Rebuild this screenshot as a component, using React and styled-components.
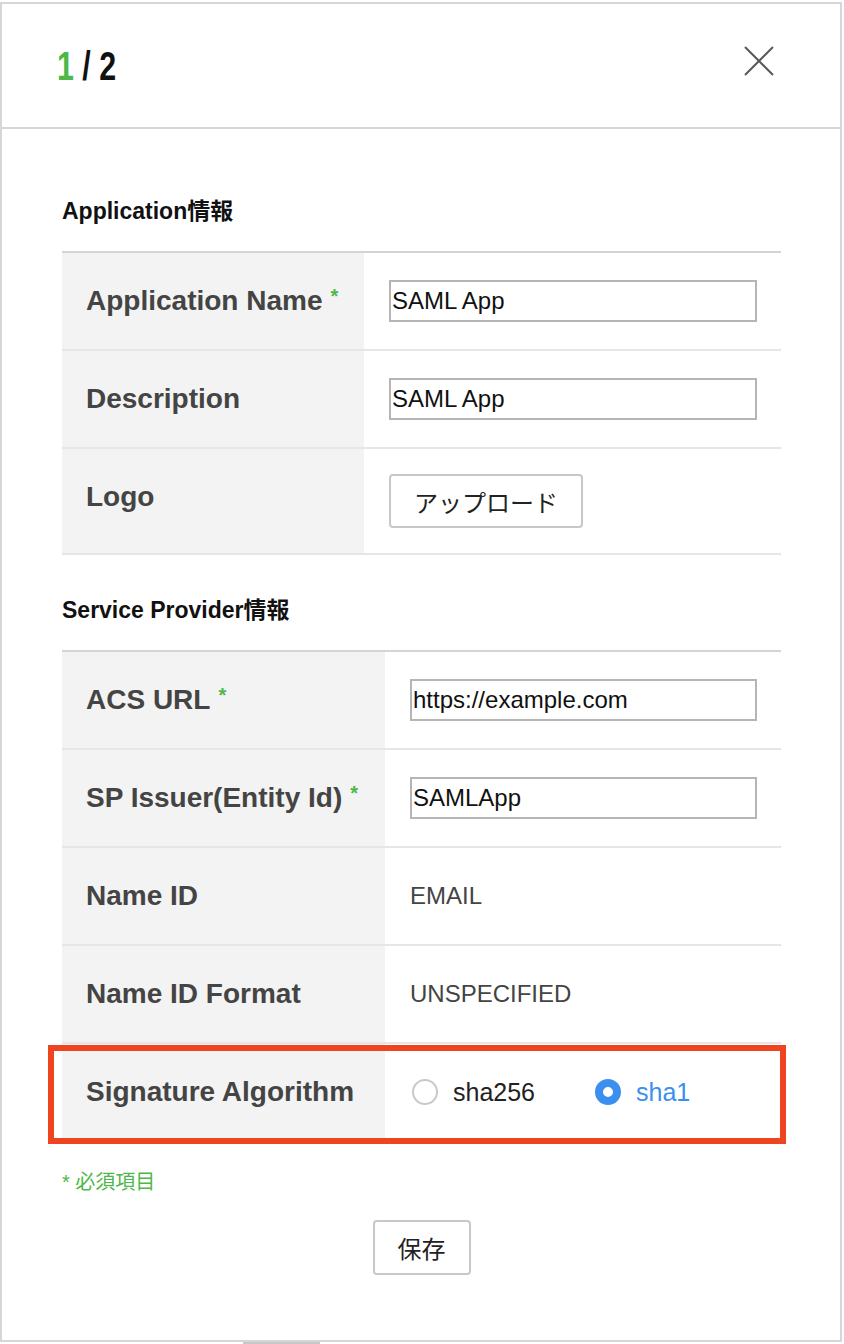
import React from 'react';
import styled, { createGlobalStyle } from 'styled-components';

const GREEN = '#4cb848';
const BLUE = '#3b8ff0';

const GlobalStyle = createGlobalStyle`
  html, body {
    margin: 0;
    padding: 0;
    background: #fff;
  }
  body {
    font-family: "Liberation Sans", "Noto Sans CJK JP", sans-serif;
    color: #222;
  }
`;

const Page = styled.div`
  padding-top: 2px;
  width: 844px;
`;

const Modal = styled.div`
  width: 842px;
  box-sizing: border-box;
  border: 2px solid #d6d6d6;
  background: #fff;
`;

const Header = styled.header`
  height: 125px;
  box-sizing: border-box;
  border-bottom: 2px solid #d6d6d6;
  display: flex;
  align-items: center;
  justify-content: space-between;
  padding: 0 65px 0 55px;
`;

// condensed look: the Narrow face is not installed, so squeeze the bold face
const Pager = styled.div`
  font-family: "Liberation Sans", sans-serif;
  font-weight: 700;
  font-size: 40px;
  line-height: 48px;
  color: #111;
  transform: scaleX(0.76);
  transform-origin: left center;
  white-space: nowrap;
`;

const Current = styled.span`
  color: ${GREEN};
`;

const CloseButton = styled.button`
  border: 0;
  background: none;
  padding: 0;
  width: 32px;
  height: 32px;
  display: flex;
  cursor: pointer;
  margin-top: -10px;
`;

const Body = styled.div`
  padding: 66px 59px 65px 60px;
`;

const SectionTitle = styled.h2`
  margin: 0 0 24px;
  font-size: 23px;
  line-height: 32px;
  font-weight: 700;
  color: #111;
`;

const Table = styled.div`
  border-top: 2px solid #d4d4d4;
  border-bottom: 2px solid #e6e6e6;
  margin-bottom: ${(p) => p.$gap || 0}px;
`;

const Row = styled.div`
  display: grid;
  grid-template-columns: ${(p) => p.$labelWidth}px 1fr;
  position: relative;
  & + & {
    border-top: 2px solid #e6e6e6;
  }
  ${(p) =>
    p.$highlight &&
    `
    &::after {
      content: '';
      position: absolute;
      left: -14px;
      right: -5px;
      top: 1px;
      bottom: -4px;
      border: 6px solid #ee4520;
      pointer-events: none;
    }
  `}
`;

const Label = styled.div`
  background: #f3f3f3;
  padding: 28px 24px;
  font-size: 28px;
  line-height: 40px;
  font-weight: 700;
  color: #444;
  white-space: nowrap;
`;

const Required = styled.span`
  color: ${GREEN};
  font-size: 20px;
  vertical-align: top;
  position: relative;
  top: -5px;
  margin-left: 8px;
`;

const Value = styled.div`
  display: flex;
  align-items: center;
  padding: 25px 24px 25px 25px;
  font-size: 24px;
  color: #444;
`;

const TextInput = styled.input`
  width: 100%;
  height: 42px;
  box-sizing: border-box;
  border: 2px solid #b5b5b5;
  border-radius: 0;
  padding: 0 1px;
  font-family: "Liberation Sans", sans-serif;
  font-size: 24px;
  color: #111;
  outline: none;
`;

const Button = styled.button`
  background: #fff;
  border: 2px solid #c8c8c8;
  border-radius: 4px;
  height: ${(p) => p.$height || 54}px;
  padding: 0 ${(p) => p.$pad || 24}px;
  font-family: "Noto Sans CJK JP", sans-serif;
  font-size: 24px;
  color: #222;
  white-space: nowrap;
  cursor: pointer;
`;

const RadioGroup = styled.div`
  display: flex;
  align-items: center;
  gap: 60px;
  padding-left: 2px;
`;

const RadioOption = styled.label`
  display: flex;
  align-items: center;
  gap: 15px;
  font-size: 25px;
  color: ${(p) => (p.$checked ? BLUE : '#222')};
`;

const RadioDot = styled.span`
  width: 26px;
  height: 26px;
  box-sizing: border-box;
  border-radius: 50%;
  background: #fff;
  border: ${(p) => (p.$checked ? `8px solid ${BLUE}` : '2px solid #c9c9c9')};
`;

const Note = styled.div`
  color: ${GREEN};
  font-family: "Liberation Sans", "Noto Sans CJK JP", sans-serif;
  font-size: 20px;
  line-height: 28px;
  margin: 26px 0 24px;
`;

const Actions = styled.div`
  display: flex;
  justify-content: center;
`;

const Thumb = styled.div`
  width: 77px;
  height: 2px;
  margin-left: 243px;
  background: #c8c8c8;
`;

function CloseIcon() {
  return (
    <svg width="32" height="32" viewBox="0 0 32 32" fill="none">
      <path d="M2 2L30 30M30 2L2 30" stroke="#595959" strokeWidth="2" />
    </svg>
  );
}

function Field({ label, required, labelWidth, highlight, children }) {
  return (
    <Row $labelWidth={labelWidth} $highlight={highlight}>
      <Label>
        {label}
        {required && <Required>*</Required>}
      </Label>
      <Value>{children}</Value>
    </Row>
  );
}

export default function App() {
  return (
    <Page>
      <GlobalStyle />
      <Modal>
        <Header>
          <Pager>
            <Current>1</Current> / 2
          </Pager>
          <CloseButton aria-label="close">
            <CloseIcon />
          </CloseButton>
        </Header>
        <Body>
          <SectionTitle>Application情報</SectionTitle>
          <Table $gap={39}>
            <Field label="Application Name" required labelWidth={302}>
              <TextInput defaultValue="SAML App" />
            </Field>
            <Field label="Description" labelWidth={302}>
              <TextInput defaultValue="SAML App" />
            </Field>
            <Field label="Logo" labelWidth={302}>
              <Button $pad={23}>アップロード</Button>
            </Field>
          </Table>

          <SectionTitle>Service Provider情報</SectionTitle>
          <Table>
            <Field label="ACS URL" required labelWidth={323}>
              <TextInput defaultValue="https://example.com" />
            </Field>
            <Field label="SP Issuer(Entity Id)" required labelWidth={323}>
              <TextInput defaultValue="SAMLApp" />
            </Field>
            <Field label="Name ID" labelWidth={323}>
              EMAIL
            </Field>
            <Field label="Name ID Format" labelWidth={323}>
              UNSPECIFIED
            </Field>
            <Field label="Signature Algorithm" labelWidth={323} highlight>
              <RadioGroup>
                <RadioOption>
                  <RadioDot />
                  sha256
                </RadioOption>
                <RadioOption $checked>
                  <RadioDot $checked />
                  sha1
                </RadioOption>
              </RadioGroup>
            </Field>
          </Table>

          <Note>* 必須項目</Note>
          <Actions>
            <Button $height={55} $pad={23}>保存</Button>
          </Actions>
        </Body>
      </Modal>
      <Thumb />
    </Page>
  );
}
